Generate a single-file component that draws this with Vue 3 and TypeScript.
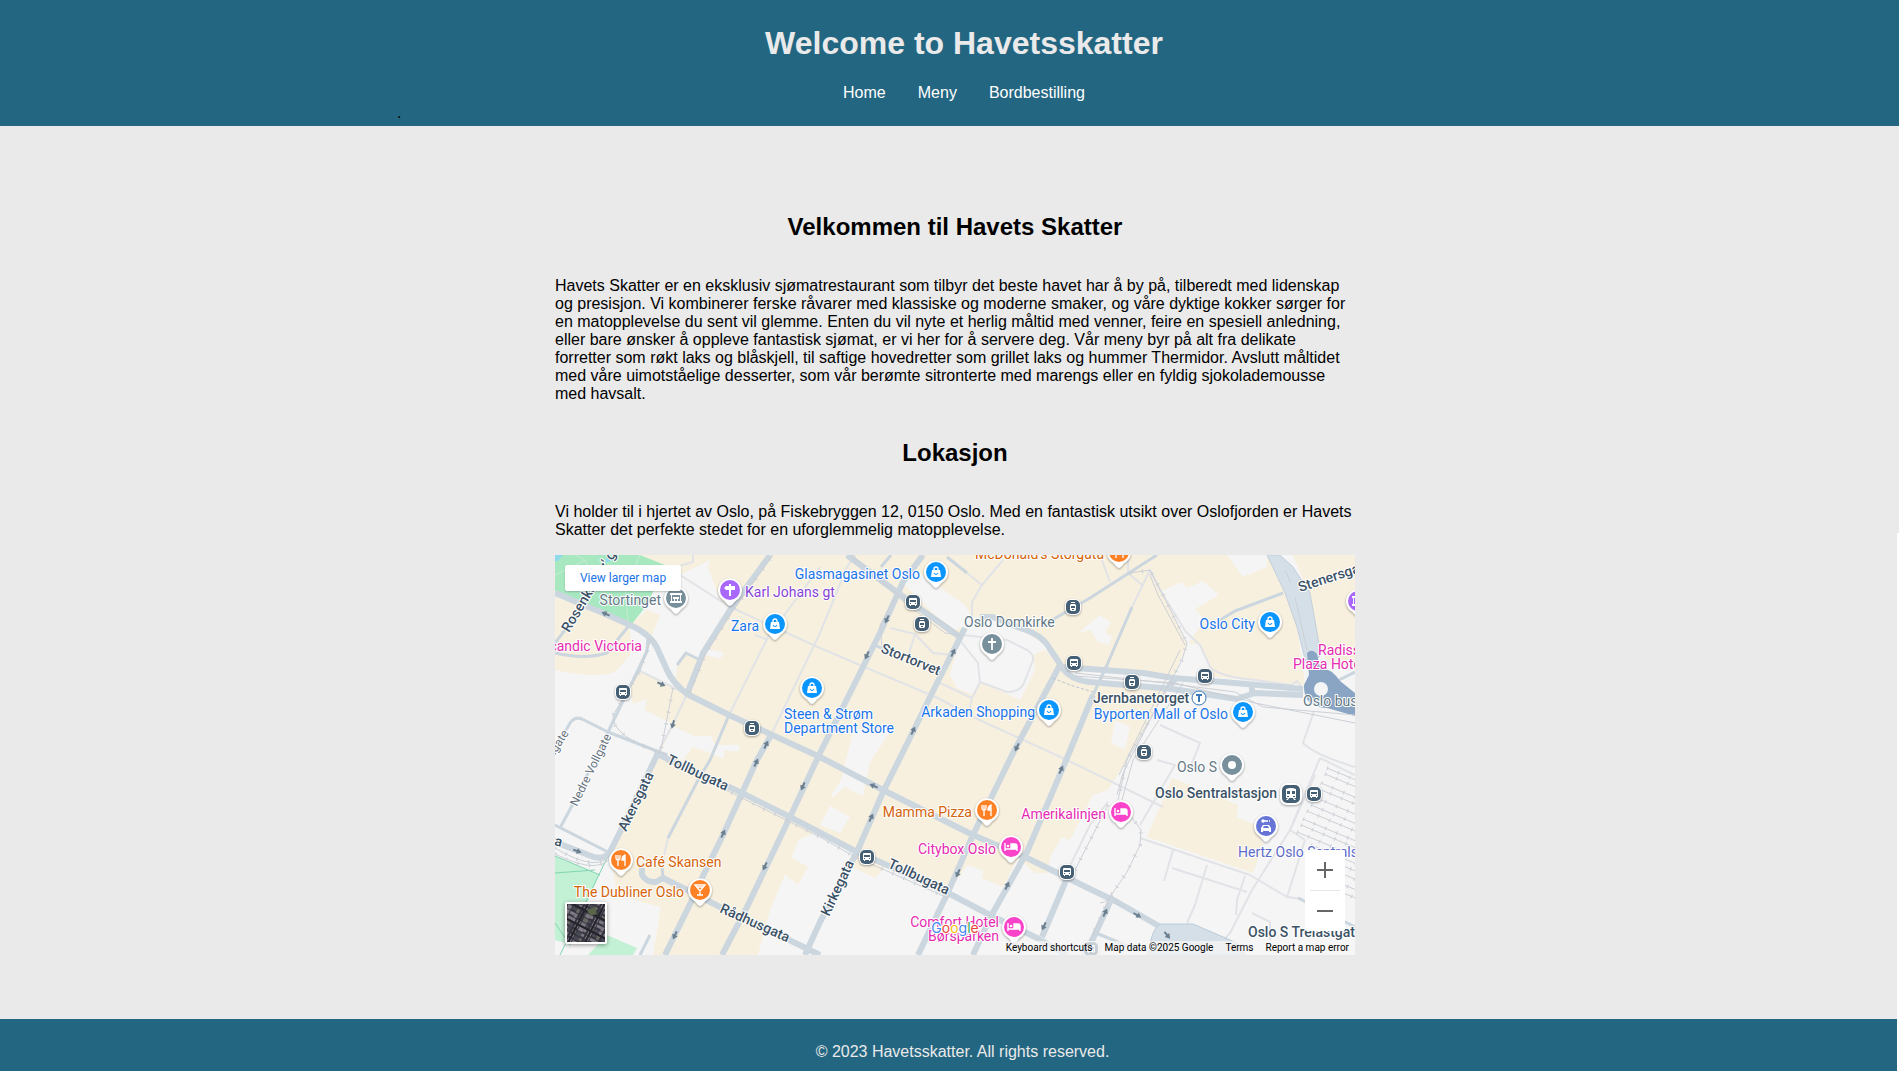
<script setup lang="ts">
type Label = { t: string; x: number; y: number; c: string; end?: boolean; r?: number }
type Pin = { x: number; y: number; c: string; i: string }
type Stop = { x: number; y: number; i: string }

const nav = ['Home', 'Meny', 'Bordbestilling']

const majorRoads = [
  'M0 38 48 58 75 70Q97 80 103 95L112 115Q117 127 132 139L174 160 265 202 328 235 418 280 472 303 535 334 562 347 602 370 645 400',
  'M102 199 187 238 235 262 302 297 332 310 393 338 435 360 482 383 512 400',
  'M132 139 148 98 175 55 215 0',
  'M87 313V320Q92 328 101 327L108 323 132 335 165 352 228 382 265 400',
  'M103 198 65 277 55 297Q48 306 36 301L0 287',
  'M215 182 202 205 187 238 168 280 147 323 138 343 110 400',
  'M368 0 348 27 325 78 308 112 265 198 235 262 192 352 167 400',
  'M410 73 385 122 345 203 328 237 302 297 265 367 250 400',
  'M505 110 458 198 418 280 393 337 363 400',
  'M538 140 512 203 472 297 435 363 418 400',
  'M512 323 487 382',
  'M425 62H438L465 73Q488 80 495 94L507 112Q515 125 535 127L618 134 682 144 700 138 748 140',
  'M507 112 535 114 588 118 618 123 668 127 748 134',
  'M292 0 343 38 395 75 405 82',
  'M697 128V140M621 123 612 134',
  'M555 347 535 390',
]
const midRoads = [
  'M93 82 92 96 83 115 53 177',
  'M53 177 20 245 5 273M0 270 53 297',
  'M0 195 15 168Q20 161 27 164L53 177 112 200',
  'M122 110 131 98 147 106',
  'M174 160 155 205 142 227 113 283',
  'M492 68 535 43 602 0',
  'M538 140 552 110 577 52',
  'M665 65 680 56 728 38',
  'M392 2 412 18M326 12 336 0',
  'M108 323 107 310',
  'M85 400 95 380',
  'M743 343 800 372M541 378 580 394',
  'M0 88 20 62 36 38',
  'M0 98Q30 105 52 98L76 68',
  'M782 126 800 117',
  'M320 90 330 95M380 118 390 113',
]
const minorRoads = [
  'M110 13 125 20 175 52 265 93 385 144 418 162 512 205 608 252',
  'M265 12 213 82 174 160',
  'M300 0 292 12 265 78 217 178',
  'M132 139 118 169 102 199',
  'M83 115 132 139',
  'M113 283 107 310',
  'M213 85 200 80',
  'M403 83 423 108 425 127 452 137Q465 137 469 128L478 105Q479 99 472 95L452 85 408 80',
  'M385 128 417 143 425 127M417 143 413 162',
  'M412 18 427 30 417 47V62M427 30 448 5',
  'M577 52 595 15 605 35 631 77 645 90 655 112Q665 122 700 125L736 130 742 126 748 134',
  'M545 0 555 27M573 18V0M573 18 587 30',
  'M605 170 645 188 635 213',
  'M759 156 748 188Q760 200 800 212',
  'M765 203 735 275 697 335 675 378 655 400',
  'M765 203 800 220M760 220 735 275 750 285M750 285 732 342 748 344',
  'M585 283 650 305 695 320 732 342',
  'M618 295 609 326M617 313 692 337M652 310 640 350 632 368M690 321 682 345 681 360M697 358 715 367V385',
  'M335 73 360 79 378 98 398 100M360 79 353 102',
  'M120 12 138 7V0',
  'M602 205 620 210 585 270',
  'M512 317 535 270 553 247',
]
const rails = [
  'M135 138 150 100 177 57 218 0',
  'M118 133 105 199M96 84 85 116 58 160Q56 182 112 200',
  'M294 0 345 40 395 72 408 84M297 0 350 48 390 78 406 80M343 38 325 70 327 92',
  'M575 18 595 15 607 38 632 88 627 105 615 128 572 205 563 245',
  'M595 20 603 40 630 90M625 95 608 130 564 220',
  'M520 118 610 128 680 137 708 152 800 160M520 121 620 128 700 148 800 168',
  'M628 128 578 205 567 245M612 132 568 218 562 240',
  'M566 248 586 275 585 290 572 317 555 342 535 385M553 250 520 315',
  'M557 337Q555 347 545 348M557 340Q560 350 570 352',
  'M112 206 187 243 265 282 302 303 332 316 393 343M0 293Q45 320 58 297M0 299Q50 324 60 295',
]
const ties = [
  { d: rails[0], n: 'a' }, { d: rails[1], n: 'b' }, { d: rails[3], n: 'c' }, { d: rails[7], n: 'd' }, { d: rails[9], n: 'e' },
]
const yard = [
  [772, 213], [770, 219], [766, 228], [764, 234], [759, 242], [756, 250], [752, 256], [748, 264], [746, 270],
  [742, 277], [756, 290], [762, 300], [766, 310], [770, 322], [774, 332],
]

const blue = '#1a73e8', grey = '#627886', pink = '#e52bb0', orange = '#d56309', navy = '#3b5266', lane = '#67727e'
const poi: Label[] = [
  { t: 'Stortinget', x: 106, y: 50, c: grey, end: true },
  { t: 'Karl Johans gt', x: 190, y: 42, c: '#8742d6' },
  { t: 'Zara', x: 204, y: 76, c: blue, end: true },
  { t: 'Glasmagasinet Oslo', x: 365, y: 24, c: blue, end: true },
  { t: 'Scandic Victoria', x: 87, y: 96, c: pink, end: true },
  { t: 'Steen & Strøm', x: 229, y: 164, c: blue },
  { t: 'Department Store', x: 229, y: 178, c: blue },
  { t: 'Oslo Domkirke', x: 409, y: 72, c: grey },
  { t: 'Arkaden Shopping', x: 480, y: 162, c: blue, end: true },
  { t: 'McDonald\'s Storgata', x: 549, y: 4, c: orange, end: true },
  { t: 'Oslo City', x: 700, y: 74, c: blue, end: true },
  { t: 'Radisson Blu', x: 763, y: 100, c: pink },
  { t: 'Plaza Hotel', x: 738, y: 114, c: pink },
  { t: 'Byporten Mall of Oslo', x: 673, y: 164, c: blue, end: true },
  { t: 'Oslo bussterminal', x: 748, y: 151, c: grey },
  { t: 'Café Skansen', x: 81, y: 312, c: orange },
  { t: 'The Dubliner Oslo', x: 129, y: 342, c: orange, end: true },
  { t: 'Mamma Pizza', x: 417, y: 262, c: orange, end: true },
  { t: 'Amerikalinjen', x: 551, y: 264, c: pink, end: true },
  { t: 'Citybox Oslo', x: 441, y: 299, c: pink, end: true },
  { t: 'Comfort Hotel', x: 444, y: 372, c: pink, end: true },
  { t: 'Børsparken', x: 444, y: 386, c: pink, end: true },
  { t: 'Oslo S', x: 662, y: 217, c: grey, end: true },
  { t: 'Hertz Oslo Sentralstasjon', x: 683, y: 302, c: '#5c6bc8' },
]
const lanes: Label[] = [
  { t: 'Nedre Vollgate', x: 22, y: 252, c: lane, r: -64 },
  { t: 'Øvre Vollgate', x: 14, y: 178, c: lane, r: -58, end: true },
]
const streets: Label[] = [
  { t: 'Jernbanetorget', x: 538, y: 148, c: navy },
  { t: 'Oslo Sentralstasjon', x: 722, y: 243, c: navy, end: true },
  { t: 'Oslo S Trelastgata', x: 693, y: 382, c: navy },
  { t: 'Stenersgata', x: 745, y: 37, c: navy, r: -18 },
  { t: 'Stortorvet', x: 325, y: 97, c: navy, r: 22 },
  { t: 'Rosenkrantz\' gate', x: 14, y: 78, c: navy, r: -59 },
  { t: 'Tollbugata', x: 111, y: 208, c: navy, r: 25 },
  { t: 'Akersgata', x: 71, y: 277, c: navy, r: -64 },
  { t: 'Tollbugata', x: 332, y: 312, c: navy, r: 25 },
  { t: 'Kirkegata', x: 274, y: 362, c: navy, r: -65 },
  { t: 'Rådhusgata', x: 164, y: 357, c: navy, r: 24 },
  { t: 'Rådhusgata', x: 6, y: 292, c: navy, r: 15, end: true },
]
const pins: Pin[] = [
  { x: 175, y: 35, c: '#a968fa', i: 'sign' },
  { x: 121, y: 43, c: '#78909c', i: 'hall' },
  { x: 220, y: 69, c: '#0a95ff', i: 'bag' },
  { x: 257, y: 133, c: '#0a95ff', i: 'bag' },
  { x: 381, y: 17, c: '#0a95ff', i: 'bag' },
  { x: 437, y: 89, c: '#78909c', i: 'cross' },
  { x: 494, y: 155, c: '#0a95ff', i: 'bag' },
  { x: 564, y: -3, c: '#ff8126', i: 'food' },
  { x: 715, y: 67, c: '#0a95ff', i: 'bag' },
  { x: 803, y: 46, c: '#a968fa', i: 'hall' },
  { x: 688, y: 157, c: '#0a95ff', i: 'bag' },
  { x: 66, y: 305, c: '#ff8126', i: 'food' },
  { x: 145, y: 335, c: '#ff8126', i: 'bar' },
  { x: 432, y: 255, c: '#ff8126', i: 'food' },
  { x: 456, y: 292, c: '#f943c9', i: 'bed' },
  { x: 459, y: 372, c: '#f943c9', i: 'bed' },
  { x: 566, y: 257, c: '#f943c9', i: 'bed' },
  { x: 677, y: 210, c: '#78909c', i: 'dot' },
  { x: 711, y: 271, c: '#6675d6', i: 'car' },
]
const stops: Stop[] = [
  { x: 68, y: 137, i: 'bus' }, { x: 197, y: 173, i: 'tram' },
  { x: 358, y: 47, i: 'bus' }, { x: 367, y: 69, i: 'tram' },
  { x: 518, y: 52, i: 'tram' }, { x: 519, y: 108, i: 'bus' },
  { x: 577, y: 127, i: 'tram' }, { x: 650, y: 121, i: 'bus' },
  { x: 589, y: 197, i: 'tram' }, { x: 759, y: 239, i: 'bus' },
  { x: 312, y: 302, i: 'bus' }, { x: 512, y: 317, i: 'bus' },
  { x: 536, y: 394, i: 'bus' },
]
// x, y, heading in degrees
const arrows = [
  [51, 59, 205], [106, 129, 25], [118, 169, 105], [211, 190, -65], [332, 64, 115], [312, 100, 115],
  [398, 98, -65], [358, 176, -65], [462, 192, 115], [201, 208, -65], [248, 231, 115], [168, 279, -65],
  [210, 311, 115], [120, 380, 115], [22, 296, 20], [319, 231, 205], [316, 263, -65], [403, 318, 115],
  [506, 215, -65], [452, 331, -65], [489, 371, 115], [550, 358, -65], [582, 360, 30], [612, 380, 50],
]

// roof blocks of the satellite thumbnail
const tones = ['#7a7783', '#5a5966', '#8f8c96', '#666a62', '#484854', '#807a86', '#625d6b']
const roofs = Array.from({ length: 144 }, (_, n) => ({
  x: (n % 12) * 5 - 10,
  y: Math.floor(n / 12) * 5 - 10,
  w: 3 + ((n * 7) % 3),
  h: 3 + ((n * 5) % 2),
  c: tones[(n * n + 3 * n) % 7],
}))

const turn = (l: Label) => (l.r ? `rotate(${l.r} ${l.x} ${l.y})` : undefined)
</script>

<template>
  <div class="page">
    <header class="top">
      <h1>Welcome to Havetsskatter</h1>
      <nav>
        <a v-for="n in nav" :key="n" href="#">{{ n }}</a>
      </nav>
      <p class="dot">.</p>
    </header>

    <main>
      <section>
        <h2>Velkommen til Havets Skatter</h2>
        <p>
          Havets Skatter er en eksklusiv sjømatrestaurant som tilbyr det beste havet har å by på, tilberedt med
          lidenskap og presisjon. Vi kombinerer ferske råvarer med klassiske og moderne smaker, og våre dyktige kokker
          sørger for en matopplevelse du sent vil glemme. Enten du vil nyte et herlig måltid med venner, feire en
          spesiell anledning, eller bare ønsker å oppleve fantastisk sjømat, er vi her for å servere deg. Vår meny byr
          på alt fra delikate forretter som røkt laks og blåskjell, til saftige hovedretter som grillet laks og hummer
          Thermidor. Avslutt måltidet med våre uimotståelige desserter, som vår berømte sitronterte med marengs eller en
          fyldig sjokolademousse med havsalt.
        </p>
      </section>
      <section>
        <h2>Lokasjon</h2>
        <p>
          Vi holder til i hjertet av Oslo, på Fiskebryggen 12, 0150 Oslo. Med en fantastisk utsikt over Oslofjorden er
          Havets Skatter det perfekte stedet for en uforglemmelig matopplevelse.
        </p>
      </section>

      <div class="map">
        <svg class="canvas" viewBox="0 0 800 400" preserveAspectRatio="xMidYMid slice" aria-label="Kart over Oslo">
          <defs>
            <g id="pin-shape">
              <path d="M0 16C-2 16-3 13-7 10A12 12 0 1 1 7 10C3 13 2 16 0 16Z" />
            </g>
            <g id="i-bag" fill="#fff">
              <path d="M-4-2H4L5 5H-5Z" />
              <path d="M-2-1V-3A2 2 0 0 1 2-3V-1" fill="none" stroke="#fff" stroke-width="1.3" />
              <path d="M-2 1Q0 4 2 1" fill="none" stroke="#0a95ff" stroke-width="1.1" />
            </g>
            <g id="i-food" fill="none" stroke="#fff" stroke-width="1.3">
              <path d="M-5-5V-2Q-5 0-3 0T-1-2V-5M-3-5V6" />
              <path d="M4 6V-5Q1-4 1 0H4" fill="#fff" />
            </g>
            <g id="i-bed" fill="none" stroke="#fff" stroke-width="1.4">
              <path d="M-6-4V4M-6 2H6M6 4V-1Q6-3 4-3H0V2" />
              <path d="M0-3H4Q6-3 6-1V2H0Z" fill="#fff" stroke="none" />
              <circle cx="-3" cy="-1" r="1.3" fill="#fff" stroke="none" />
            </g>
            <g id="i-bar" fill="none" stroke="#fff" stroke-width="1.4">
              <path d="M-5-5H5L0 1ZM0 0V5M-3 5H3M-3-3H3" />
            </g>
            <g id="i-cross" stroke="#fff" stroke-width="1.8"><path d="M0-6V6M-4-2H4" /></g>
            <g id="i-sign" fill="#fff"><path d="M-1-6H1V-4H5V0H1V6H-1V0H-4L-6-2-4-4H-1Z" /></g>
            <g id="i-hall" fill="#fff">
              <path d="M-6-5H6V-3H-6ZM-6 3H6V5H-6ZM-5-3H-4V3H-5ZM4-3H5V3H4ZM-3-1H3V1H2V3H1V1H-1V3H-2V1H-3Z" />
            </g>
            <g id="i-dot"><circle r="4" fill="#fff" /></g>
            <g id="i-car" fill="#fff">
              <path d="M-3-1H3L5 2V6H3V5H-3V6H-5V2Z" />
              <path d="M-3-5H4" stroke="#fff" stroke-width="1.3" stroke-dasharray="5 1" />
              <circle cx="-3" cy="-5" r="1.7" />
              <path d="M-2 0H2L3 2H-3Z" fill="#6675d6" />
            </g>
            <g id="i-bus">
              <path d="M-3-4H3Q4-4 4-3V3H3V4H2V3H-2V4H-3V3H-4V-3Q-4-4-3-4Z" fill="#fff" />
              <path d="M-3-2H3V0H-3ZM-3 1H-2V2H-3ZM2 1H3V2H2Z" fill="#455f75" />
            </g>
            <g id="i-tram">
              <path d="M-2-5H2V-4H-2ZM-2-3H2L3-2V3L2 4H-2L-3 3V-2Z" fill="#fff" />
              <path d="M-2-1H2V1H-2ZM-1 2H1V3H-1Z" fill="#455f75" />
            </g>
          </defs>

          <rect width="800" height="400" fill="#f5f5f5" />
          <g fill="#f8f0de">
            <path d="M85 0H712L730 38 742 72 750 130 660 122 645 90 632 88 618 122 505 110 495 94 465 73 438 62 417 62 410 73 403 90 395 120 402 133 417 139 425 128 450 138 465 145 480 115 478 100 490 95 505 112 535 128 610 136 572 205 553 235 538 240 515 285 507 282 496 300 492 318 480 318 463 303 448 332 427 323 428 315 412 310 393 338 332 310 320 323 297 312 302 297 265 276 243 285 232 315 215 355 203 400H98L106 352 90 348 62 340 55 297 103 198 118 169 90 155 92 144 78 149 75 133 83 115 132 139 148 98 175 55 165 45 153 12 155 5 125 20 110 10Z" />
            <path d="M0 42 75 70 76 85 75 100 60 117Q40 124 0 115ZM92 55 105 60 97 80 75 70ZM122 110 131 98 147 106 132 139 120 128ZM738 0H800V115L775 110 762 90 755 42Z" />
            <path d="M617 223 635 230 683 250 682 263 702 270 708 290 698 318 592 282Z" />
            <path d="M232 300 253 312 243 330 228 318Z" />
          </g>
          <g fill="#f5f5f5">
            <path d="M348 28 357 14 382 30 410 50 417 62 410 73 395 75ZM607 36 627 27 632 33 648 26 664 40 640 54 650 65 632 90ZM155 94 169 98 165 104 150 100ZM545 60 556 67 550 77 557 82 554 90 543 87 535 75 523 78ZM298 177 303 173 323 180 328 168 335 177 315 207 308 241 290 232 278 242 276 240 286 225ZM275 251 295 262 285 278 265 270ZM672 0 688 22 712 12V0ZM560 165 575 172 570 195 556 188Z" />
            <path d="M118 171 139 181 156 181 160 190 185 190 183 197 170 195 168 204 150 196 138 192 128 205 105 198Z" />
          </g>
          <path d="M0 0H85L110 10 92 50 76 70 0 36Z" fill="#a7e8c1" />
          <path d="M0 301 44 320 30 353 10 388 0 385ZM52 380 82 393 78 400H33Z" fill="#c3f1d5" />
          <g fill="none" stroke="#82d3b2"><path d="M0 301 45 320M0 318 40 315M55 297 5 400M0 368 15 390" /></g>
          <g fill="none" stroke="#c5ecd2"><path d="M0 20 30 5 45 30 70 35 85 0M70 35 73 66M30 5 20 0M10 42 20 15M45 30 95 30" /></g>
          <path d="M0 0H8L3 6H0ZM52 0 60 4 50 8Z" fill="#8fd9ec" />

          <g class="line minor"><path v-for="d in minorRoads" :key="d" :d="d" /></g>
          <g class="line mid"><path v-for="d in midRoads" :key="d" :d="d" /></g>
          <g class="line major"><path v-for="d in majorRoads" :key="d" :d="d" /></g>
          <path d="M498 123 515 130 538 137" class="line dash" />

          <path d="M593 400Q597 370 607 369H638L682 388 690 400Z" fill="#d5dfe7" stroke="#bccbd9" />
          <path d="M712 0H725L738 12 755 38 766 100 752 112 742 72 730 38Z" fill="#d5dfe7" stroke="#c3cfdb" />
          <path d="M730 15 736 28M740 42 752 95" class="line rail" />
          <path d="M752 98Q757 93 762 99L765 112Q777 114 785 126L800 138V161L772 153Q748 152 749 130L754 120Z" fill="#8aa4c3" />
          <circle cx="766" cy="134" r="7" fill="#f5f5f5" />

          <g class="line rail"><path v-for="d in rails" :key="d" :d="d" /></g>
          <g class="line ties"><path v-for="t in ties" :key="t.n" :d="t.d" /></g>
          <g class="line rail">
            <path v-for="[x, y] in yard" :key="y" :d="`M${x} ${y}l84 35`" />
            <path v-for="[x, y] in yard" :key="-y" class="ties" :d="`M${x} ${y}l84 35`" />
          </g>
          <path
            v-for="(a, n) in arrows" :key="n" d="M-4-1H0V-3L5 0 0 3V1H-4Z" fill="#6b7f8f"
            :transform="`translate(${a[0]} ${a[1]}) rotate(${a[2]})`"
          />

          <g v-for="s in stops" :key="`${s.x}-${s.y}`" :transform="`translate(${s.x} ${s.y})`">
            <rect x="-8" y="-8" width="16" height="16" rx="6" fill="#fff" class="shade" />
            <rect x="-7" y="-7" width="14" height="14" rx="5" fill="#455f75" />
            <use :href="`#i-${s.i}`" />
          </g>
          <g transform="translate(736 239)">
            <rect x="-11" y="-11" width="22" height="22" rx="7" fill="#fff" class="shade" />
            <rect x="-9" y="-9" width="18" height="18" rx="5" fill="#455f75" />
            <path d="M-5-5Q0-7 5-5V4H3L5 6H3L2 4H-2L-3 6H-5L-3 4H-5Z" fill="#fff" />
            <path d="M-4-3H-1V0H-4ZM1-3H4V0H1ZM-4 2H-2V3H-4ZM2 2H4V3H2Z" fill="#455f75" />
          </g>
          <g transform="translate(644 143)">
            <circle r="7" fill="#fff" stroke="#3a78b8" />
            <path d="M-3-3H3M0-3V4" stroke="#3a78b8" stroke-width="2" />
          </g>
          <g v-for="p in pins" :key="`${p.x}-${p.y}`" :transform="`translate(${p.x} ${p.y})`">
            <use href="#pin-shape" fill="#fff" class="shade" />
            <circle r="10" :fill="p.c" />
            <use :href="`#i-${p.i}`" />
          </g>

          <text
            v-for="l in poi" :key="l.t" class="label" :x="l.x" :y="l.y" :fill="l.c"
            :text-anchor="l.end ? 'end' : 'start'"
          >{{ l.t }}</text>
          <text
            v-for="l in lanes" :key="l.t" class="label lane" :x="l.x" :y="l.y" :fill="l.c"
            :text-anchor="l.end ? 'end' : 'start'" :transform="turn(l)"
          >{{ l.t }}</text>
          <text
            v-for="(l, n) in streets" :key="n" class="label street" :x="l.x" :y="l.y" :fill="l.c"
            :text-anchor="l.end ? 'end' : 'start'" :transform="turn(l)"
          >{{ l.t }}</text>
          <text class="google" x="400" y="378" text-anchor="middle">
            <tspan fill="#4285f4">G</tspan><tspan fill="#ea4335">o</tspan><tspan fill="#fbbc04">o</tspan><tspan fill="#4285f4">g</tspan><tspan fill="#34a853">l</tspan><tspan fill="#ea4335">e</tspan>
          </text>
        </svg>

        <a class="larger" href="#">View larger map</a>
        <button class="satellite" type="button" aria-label="Show satellite imagery">
          <svg viewBox="0 0 38 38">
            <rect width="38" height="38" fill="#34333d" />
            <g transform="rotate(27 19 19)">
              <rect v-for="(r, n) in roofs" :key="n" :x="r.x" :y="r.y" :width="r.w" :height="r.h" :fill="r.c" />
              <path d="M12-10V50M27-10V50M-10 8H50M-10 24H50" stroke="#24232c" stroke-width="2" />
            </g>
            <path d="M20 6 28 3 30 10 23 12Z" fill="#59644a" />
          </svg>
        </button>
        <div class="zoom">
          <button type="button" aria-label="Zoom in"><svg viewBox="0 0 18 18"><path d="M1 9H17M9 1V17" /></svg></button>
          <button type="button" aria-label="Zoom out"><svg viewBox="0 0 18 18"><path d="M1 9H17" /></svg></button>
        </div>
        <div class="credits">
          <button type="button">Keyboard shortcuts</button>
          <span>Map data ©2025 Google</span>
          <a href="#">Terms</a>
          <a href="#">Report a map error</a>
        </div>
      </div>
    </main>

    <footer>© 2023 Havetsskatter. All rights reserved.</footer>
    <div class="edge"></div>
  </div>
</template>

<style>
html,
body {
  margin: 0;
  background: #eaeaea;
}
</style>

<style scoped>
.page {
  position: relative;
  min-height: 100vh;
  display: flex;
  flex-direction: column;
  overflow: hidden;
  font: 16px/18px "Liberation Sans", Arial, sans-serif;
  color: #000;
}
h1,
h2,
p {
  margin: 0;
}
.top {
  display: flex;
  flex-direction: column;
  align-items: center;
  padding: 25px 0 4px 29px;
  background: #236681;
}
h1 {
  font-size: 32px;
  line-height: 36px;
  color: #eaeaea;
}
nav {
  display: flex;
  gap: 32px;
  margin-top: 23px;
}
nav a {
  color: #fff;
  text-decoration: none;
}
.dot {
  align-self: flex-start;
  margin-top: 2px;
  padding-left: 368px;
}
main {
  width: 800px;
  max-width: 100%;
  box-sizing: content-box;
  align-self: center;
  padding: 87px 0 64px 11px;
}
h2 {
  font-size: 24px;
  line-height: 28px;
  text-align: center;
  margin-bottom: 36px;
}
section + section {
  margin-top: 36px;
}
.map {
  position: relative;
  height: 400px;
  margin-top: 16px;
  overflow: hidden;
  font-family: Roboto, sans-serif;
}
.canvas {
  display: block;
  width: 100%;
  height: 100%;
}
.line {
  fill: none;
  stroke-linejoin: round;
}
.minor {
  stroke: #e1e3e7;
  stroke-width: 2;
}
.mid {
  stroke: #cbd6df;
  stroke-width: 3;
}
.major {
  stroke: #cbd6df;
  stroke-width: 6;
}
.rail {
  stroke: #ccd0d6;
  stroke-width: 1;
}
.ties {
  stroke: #ccd0d6;
  stroke-width: 4;
  stroke-dasharray: 1 11;
}
.dash {
  stroke: #b7c3d0;
  stroke-dasharray: 3 2;
}
.shade {
  filter: drop-shadow(0 1px 1px rgb(0 0 0 / 35%));
}
.label {
  font-size: 14px;
  paint-order: stroke;
  stroke: #fff;
  stroke-width: 2px;
  stroke-linejoin: round;
}
.lane {
  font-size: 12px;
}
.street {
  font-weight: 500;
}
.google {
  font: 14px Inter, sans-serif;
  paint-order: stroke;
  stroke: #fff;
  stroke-width: 2px;
}
.larger {
  position: absolute;
  top: 10px;
  left: 10px;
  width: 116px;
  font-size: 12px;
  line-height: 26px;
  text-align: center;
  text-decoration: none;
  color: #1a73e8;
  background: #fff;
  border-radius: 2px;
  box-shadow: 0 1px 2px rgb(60 64 67 / 30%);
}
button {
  margin: 0;
  padding: 0;
  border: 0;
  background: none;
  font: inherit;
  color: inherit;
}
.satellite {
  position: absolute;
  left: 10px;
  bottom: 11px;
  width: 42px;
  height: 42px;
  border: 2px solid #fff;
  border-radius: 2px;
  box-shadow: 0 1px 4px rgb(0 0 0 / 40%);
}
.satellite svg {
  display: block;
  width: 100%;
  height: 100%;
}
.zoom {
  position: absolute;
  right: 10px;
  bottom: 24px;
  width: 40px;
  padding: 0 5px;
  box-sizing: border-box;
  background: #fff;
  border-radius: 2px;
}
.zoom button {
  display: flex;
  align-items: center;
  justify-content: center;
  width: 100%;
  height: 40px;
}
.zoom button + button {
  border-top: 1px solid #e6e6e6;
  height: 41px;
}
.zoom svg {
  width: 18px;
  height: 18px;
  stroke: #666;
  stroke-width: 2;
}
.credits {
  position: absolute;
  right: 0;
  bottom: 0;
  display: flex;
  gap: 12px;
  padding: 0 6px;
  font-size: 10px;
  line-height: 14px;
  background: rgb(245 245 245 / 75%);
}
.credits a {
  color: inherit;
  text-decoration: none;
}
footer {
  flex: 1;
  padding: 24px 0 10px 26px;
  background: #236681;
  color: #eaeaea;
  text-align: center;
}
.edge {
  position: absolute;
  top: 533px;
  right: 0;
  bottom: 0;
  width: 2px;
  background: #fff;
}
</style>
